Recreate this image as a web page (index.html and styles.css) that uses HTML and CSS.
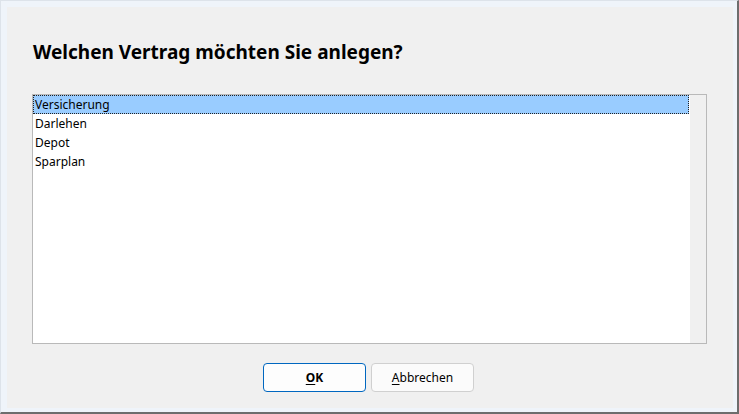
FILE: index.html
```html
<!DOCTYPE html>
<html lang="de">
<head>
<meta charset="utf-8">
<title>Vertrag anlegen</title>
<link rel="stylesheet" href="styles.css">
</head>
<body>
<div class="window">
  <div class="panel">
    <h1 class="title">Welchen Vertrag möchten Sie anlegen?</h1>
    <div class="listbox">
      <ul class="items">
        <li class="item selected">Versicherung</li>
        <li class="item">Darlehen</li>
        <li class="item">Depot</li>
        <li class="item">Sparplan</li>
      </ul>
      <div class="scrolltrack"></div>
    </div>
    <div class="buttons">
      <button class="btn default"><u>O</u>K</button>
      <button class="btn"><u>A</u>bbrechen</button>
    </div>
  </div>
</div>
</body>
</html>
```
FILE: styles.css
```css
html, body {
  margin: 0;
  padding: 0;
  background: #eff4fa;
}
.window {
  width: 739px;
  height: 414px;
  box-sizing: border-box;
  border-top: 1px solid #dde3ea;
  border-left: 1px solid #dde3ea;
  border-right: 2px solid #6d6d6d;
  border-bottom: 2px solid #6d6d6d;
  padding: 6px 4px 4px 6px;
  background: #eff4fa;
  font-family: "Noto Sans", "Open Sans", sans-serif;
  color: #000;
}
.panel {
  height: 100%;
  background: #f0f0f0;
  display: flex;
  flex-direction: column;
  padding: 0 26px 0 25px;
  box-sizing: border-box;
}
.title {
  margin: 33px 0 0 1px;
  font-size: 19px;
  line-height: 24px;
  font-weight: 700;
  letter-spacing: 0;
}
.listbox {
  margin-top: 30px;
  width: 675px;
  height: 250px;
  box-sizing: border-box;
  border: 1px solid #b9b9b9;
  background: #ffffff;
  display: flex;
}
.items {
  list-style: none;
  margin: 0;
  padding: 0;
  flex: 1;
  background: #fff;
}
.item {
  height: 19px;
  line-height: 18px;
  padding-top: 1px;
  font-size: 12px;
  padding-left: 2px;
  box-sizing: border-box;
  margin-right: 1px;
}
.item.selected {
  background: #99ccff;
  outline: 1px dotted #222;
  outline-offset: -1px;
}
.scrolltrack {
  width: 16px;
  background: #f0f0f0;
}
.buttons {
  margin-top: 19px;
  display: flex;
  justify-content: center;
  gap: 5px;
  padding-right: 2px;
}
.btn {
  width: 103px;
  height: 29px;
  box-sizing: border-box;
  border: 1px solid #d0d0d0;
  border-radius: 4px;
  background: #fbfbfb;
  font-family: "Noto Sans", "Open Sans", sans-serif;
  font-size: 12px;
  color: #000;
  padding: 0;
}
.btn.default {
  border-color: #0067c0;
  background: #fdfdfd;
  font-weight: 700;
}
.btn u {
  text-underline-offset: 2px;
}
```
